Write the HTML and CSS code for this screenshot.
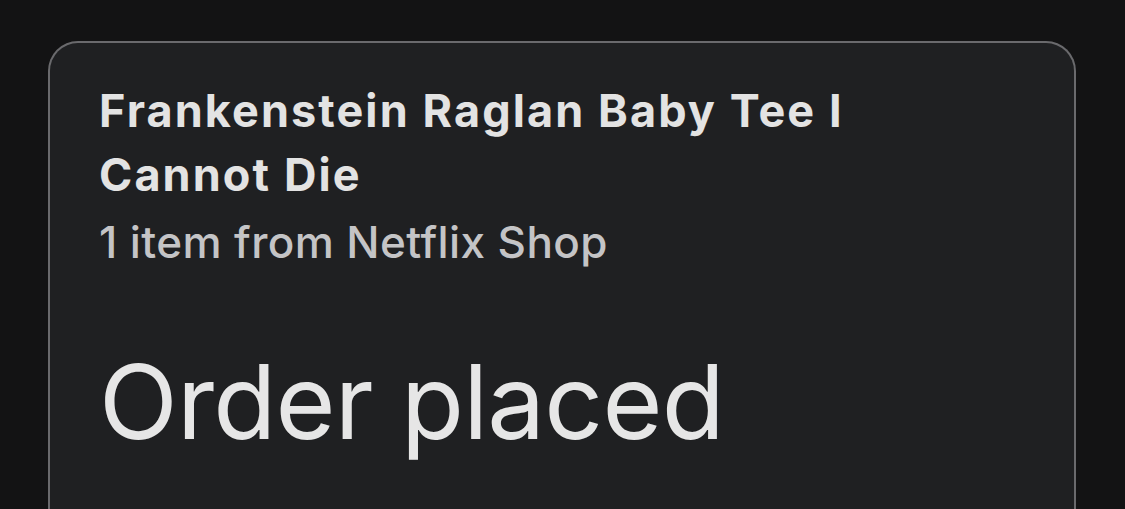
FILE: index.html
```html
<!DOCTYPE html>
<html lang="en">
<head>
<meta charset="utf-8">
<title>Order</title>
<link rel="stylesheet" href="styles.css">
</head>
<body>
<main class="page">
  <section class="card">
    <h1 class="title">Frankenstein Raglan Baby Tee I Cannot Die</h1>
    <p class="subtitle">1 item from Netflix Shop</p>
    <h2 class="status">Order placed</h2>
  </section>
</main>
</body>
</html>
```

FILE: styles.css
```css
html, body {
  margin: 0;
  padding: 0;
  background: #131314;
  height: 100%;
  overflow: hidden;
}

.page {
  padding: 41px 49px 0 48px;
  font-family: Inter, Roboto, sans-serif;
}

.card {
  background: #1f2022;
  border: 2px solid #6a6a6d;
  border-bottom: none;
  border-radius: 30px 30px 0 0;
  padding: 36px 49px 0 49px;
  height: 470px;
  box-sizing: border-box;
}

.title {
  margin: 0;
  max-width: 820px;
  font-size: 45px;
  font-weight: 700;
  letter-spacing: 2.1px;
  line-height: 64px;
  color: #e3e3e3;
}

.subtitle {
  margin: 3px 0 0 0;
  font-size: 44px;
  font-weight: 500;
  letter-spacing: 0.4px;
  line-height: 64px;
  color: #c4c4c6;
}

.status {
  margin: 73px 0 0 0;
  font-size: 103px;
  font-weight: 400;
  letter-spacing: -0.8px;
  line-height: 110px;
  color: #e6e6e6;
}
```
